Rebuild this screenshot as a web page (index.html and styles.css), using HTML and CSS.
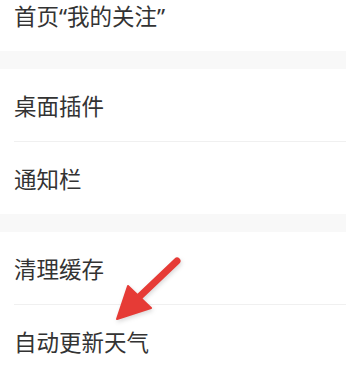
FILE: index.html
```html
<!DOCTYPE html>
<html lang="zh-CN">
<head>
    <meta charset="UTF-8">
    <meta name="viewport" content="width=device-width, initial-scale=1.0">
    <title>设置</title>
    <link rel="stylesheet" href="styles.css">
</head>
<body>
    <div class="settings">
        <div class="group group-first">
            <div class="item">首页“我的关注”</div>
        </div>
        <div class="group">
            <div class="item">桌面插件</div>
            <div class="item">通知栏</div>
        </div>
        <div class="group">
            <div class="item">清理缓存</div>
            <div class="item">自动更新天气</div>
        </div>
    </div>

    <!-- 箭头标注 -->
    <svg class="arrow" width="346" height="379" viewBox="0 0 346 379">
        <line x1="177" y1="261" x2="137" y2="299" stroke="#e63b36" stroke-width="7" stroke-linecap="round"/>
        <polygon points="117,319 128,286 151,308" fill="#e63b36" stroke="#e63b36" stroke-width="2" stroke-linejoin="round"/>
    </svg>
</body>
</html>
```

FILE: styles.css
```css
body {
    margin: 0;
    background-color: #fff;
    font-family: "Noto Sans", "Noto Sans CJK SC", sans-serif;
    overflow: hidden;
}
.settings {
    background-color: #f8f8f8;
    display: flex;
    flex-direction: column;
    gap: 18px; /* 分组之间的灰色间隔 */
}
.group {
    background-color: #fff;
    padding-left: 14px;
}
.group-first {
    margin-top: -21px; /* 第一项顶部被截掉 */
}
.item {
    height: 72px;
    display: flex;
    align-items: center;
    font-size: 22.5px;
    color: #333;
    border-bottom: 1px solid #f0f0f0;
}
.item:last-child {
    border-bottom: none;
}
.arrow {
    position: absolute;
    left: 0;
    top: 0;
    filter: drop-shadow(1px 2px 2px rgba(0,0,0,0.15));
}
```
